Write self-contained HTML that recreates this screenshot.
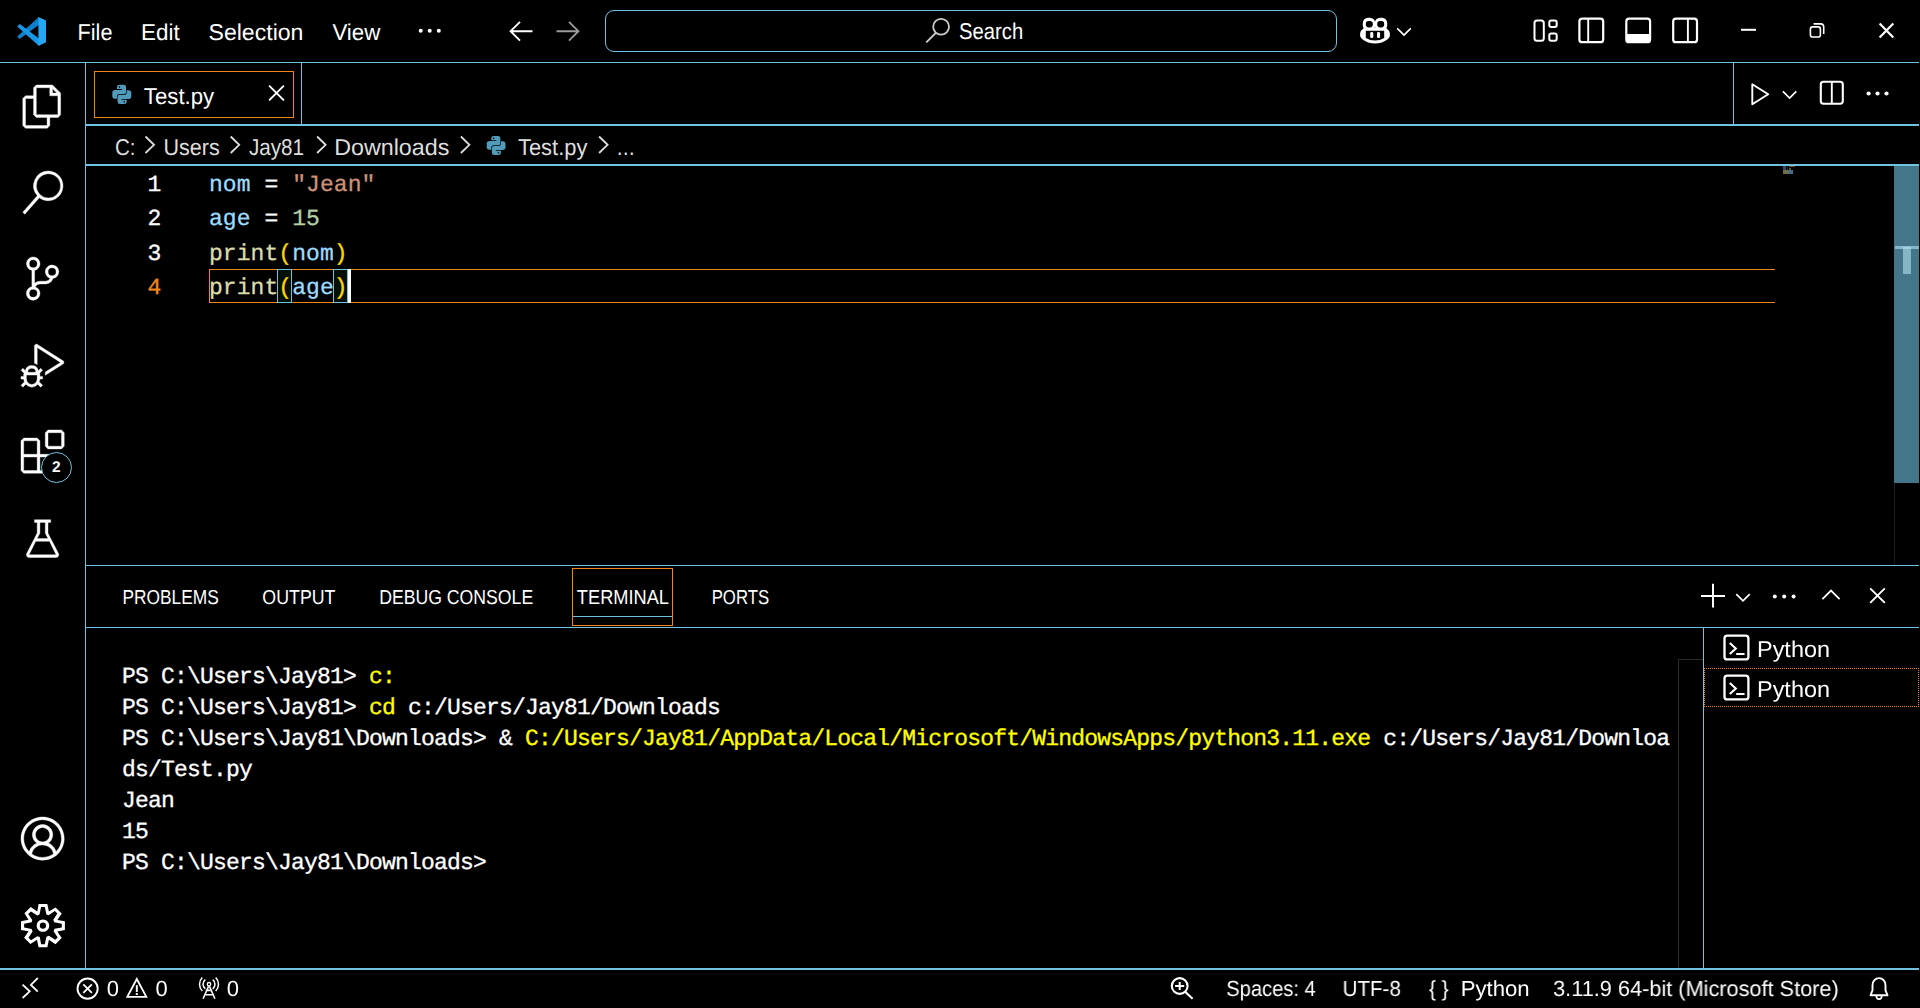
<!DOCTYPE html>
<html lang="en"><head><meta charset="utf-8"><title>Test.py - Visual Studio Code</title>
<style>
html,body{margin:0;padding:0;background:#000;}
body{text-rendering:geometricPrecision;width:1920px;height:1008px;position:relative;overflow:hidden;font-family:"Liberation Sans", sans-serif;color:#fff;}
.b{position:absolute;}
.t{position:absolute;white-space:pre;line-height:0;font-family:"Liberation Sans", sans-serif;transform-origin:0 0;}
.m{position:absolute;white-space:pre;line-height:0;font-family:"Liberation Mono", monospace;-webkit-text-stroke:0.3px;}
svg{position:absolute;overflow:visible;}
.s{fill:none;stroke:#fff;stroke-width:1.8;}
</style></head><body>
<!-- frame lines and boxes -->
<div class="b" style="left:0px;top:62px;width:1919px;height:1px;background:#6FC3DF;"></div>
<div class="b" style="left:85px;top:63px;width:1px;height:905px;background:#6FC3DF;"></div>
<div class="b" style="left:86px;top:124px;width:1833px;height:2px;background:#6FC3DF;"></div>
<div class="b" style="left:301px;top:63px;width:1px;height:61px;background:#6FC3DF;"></div>
<div class="b" style="left:1733px;top:63px;width:1px;height:61px;background:#6FC3DF;"></div>
<div class="b" style="left:94px;top:71px;width:200px;height:47px;border:1px solid #F38518;box-sizing:border-box;"></div>
<div class="b" style="left:86px;top:164px;width:1833px;height:2px;background:#6FC3DF;"></div>
<div class="b" style="left:86px;top:565px;width:1833px;height:1px;background:#6FC3DF;"></div>
<div class="b" style="left:86px;top:627px;width:1833px;height:1px;background:#6FC3DF;"></div>
<div class="b" style="left:0px;top:968px;width:1919px;height:2px;background:#6FC3DF;"></div>
<div class="b" style="left:605px;top:10px;width:732px;height:42px;border:1px solid #6FC3DF;box-sizing:border-box;border-radius:9px;"></div>
<div class="b" style="left:209px;top:269px;width:1566px;height:34px;border-top:1px solid #F38518;border-bottom:1px solid #F38518;border-left:1px solid #F38518;box-sizing:border-box;"></div>
<div class="b" style="left:277px;top:269px;width:15px;height:34px;background:#031003;border:1px solid #6FC3DF;box-sizing:border-box;"></div>
<div class="b" style="left:333px;top:269px;width:15px;height:34px;background:#031003;border:1px solid #6FC3DF;box-sizing:border-box;"></div>
<div class="b" style="left:348px;top:269px;width:3px;height:34px;background:#fff;"></div>
<div class="b" style="left:1894px;top:166px;width:25px;height:317px;background:#437688;"></div>
<div class="b" style="left:1895px;top:246px;width:24px;height:3px;background:#86b8ca;"></div>
<div class="b" style="left:1903px;top:247px;width:8px;height:27px;background:#86b5c6;"></div>
<div class="b" style="left:1903px;top:247px;width:8px;height:2px;background:#9fd1e3;"></div>
<div class="b" style="left:1894px;top:483px;width:1px;height:82px;background:#1c1c1c;"></div>
<div class="b" style="left:1783px;top:166px;width:3px;height:4px;background:#2c4d6a;"></div>
<div class="b" style="left:1787px;top:166px;width:1px;height:4px;background:#2a2a2a;"></div>
<div class="b" style="left:1789px;top:166px;width:6px;height:1px;background:#7a4029;"></div>
<div class="b" style="left:1789px;top:168px;width:2px;height:2px;background:#4f6030;"></div>
<div class="b" style="left:1783px;top:170px;width:6px;height:4px;background:#6f6d49;"></div>
<div class="b" style="left:1789px;top:170px;width:4px;height:4px;background:#386e96;"></div>
<div class="b" style="left:572px;top:568px;width:101px;height:58px;border:1px solid #F38518;box-sizing:border-box;"></div>
<div class="b" style="left:573px;top:616px;width:99px;height:1px;background:#6FC3DF;"></div>
<div class="b" style="left:1703px;top:628px;width:1px;height:340px;background:#6FC3DF;"></div>
<div class="b" style="left:1704px;top:668px;width:215px;height:39px;border:1px dotted #F38518;box-sizing:border-box;"></div>
<div class="b" style="left:1678px;top:659px;width:1px;height:309px;background:#2b2b2b;"></div>
<div class="b" style="left:1678px;top:659px;width:25px;height:1px;background:#2b2b2b;"></div>
<!-- ui text -->
<span class="t" style="left:0;top:0;font-size:22.9px;transform:translate(77.61px,32.07px) scaleX(0.9445);color:#fff;">File</span>
<span class="t" style="left:0;top:0;font-size:22.9px;transform:translate(140.98px,32.07px) scaleX(0.9811);color:#fff;">Edit</span>
<span class="t" style="left:0;top:0;font-size:22.9px;transform:translate(208.49px,32.07px) scaleX(1.0083);color:#fff;">Selection</span>
<span class="t" style="left:0;top:0;font-size:22.9px;transform:translate(332.43px,32.07px) scaleX(0.9717);color:#fff;">View</span>
<span class="t" style="left:0;top:0;font-size:22.9px;transform:translate(959.11px,31.07px) scaleX(0.8825);color:#fff;">Search</span>
<span class="t" style="left:0;top:0;font-size:22.9px;transform:translate(143.84px,96.07px) scaleX(0.9698);color:#fff;">Test.py</span>
<span class="t" style="left:0;top:0;font-size:22.9px;transform:translate(114.88px,147.07px) scaleX(0.8992);color:#dedede;">C:</span>
<span class="t" style="left:0;top:0;font-size:22.9px;transform:translate(163.50px,147.07px) scaleX(0.9400);color:#dedede;">Users</span>
<span class="t" style="left:0;top:0;font-size:22.9px;transform:translate(248.88px,147.07px) scaleX(0.9023);color:#dedede;">Jay81</span>
<span class="t" style="left:0;top:0;font-size:22.9px;transform:translate(334.16px,147.07px) scaleX(1.0172);color:#dedede;">Downloads</span>
<span class="t" style="left:0;top:0;font-size:22.9px;transform:translate(517.99px,147.07px) scaleX(0.9561);color:#dedede;">Test.py</span>
<span class="t" style="left:0;top:0;font-size:22.9px;transform:translate(616.79px,147.07px) scaleX(0.9343);color:#dedede;">...</span>
<span class="t" style="left:0;top:0;font-size:20.2px;transform:translate(122.42px,598.00px) scaleX(0.8584);color:#fff;">PROBLEMS</span>
<span class="t" style="left:0;top:0;font-size:20.2px;transform:translate(262.37px,598.00px) scaleX(0.8807);color:#fff;">OUTPUT</span>
<span class="t" style="left:0;top:0;font-size:20.2px;transform:translate(379.18px,598.00px) scaleX(0.8745);color:#fff;">DEBUG CONSOLE</span>
<span class="t" style="left:0;top:0;font-size:20.2px;transform:translate(576.87px,598.00px) scaleX(0.9019);color:#fff;">TERMINAL</span>
<span class="t" style="left:0;top:0;font-size:20.2px;transform:translate(711.66px,598.00px) scaleX(0.8304);color:#fff;">PORTS</span>
<span class="t" style="left:0;top:0;font-size:22.9px;transform:translate(1757.00px,649.07px) scaleX(1.0246);color:#fff;will-change:transform;">Python</span>
<span class="t" style="left:0;top:0;font-size:22.9px;transform:translate(1757.00px,689.07px) scaleX(1.0246);color:#fff;will-change:transform;">Python</span>
<span class="t" style="left:0;top:0;font-size:21.8px;transform:translate(106.70px,988.98px) scaleX(1.0108);color:#fff;will-change:transform;">0</span>
<span class="t" style="left:0;top:0;font-size:21.8px;transform:translate(155.42px,988.98px) scaleX(1.0061);color:#fff;will-change:transform;">0</span>
<span class="t" style="left:0;top:0;font-size:21.8px;transform:translate(226.87px,988.98px) scaleX(1.0119);color:#fff;will-change:transform;">0</span>
<span class="t" style="left:0;top:0;font-size:21.8px;transform:translate(1226.29px,988.98px) scaleX(0.9225);color:#fff;will-change:transform;">Spaces: 4</span>
<span class="t" style="left:0;top:0;font-size:21.8px;transform:translate(1342.57px,988.98px) scaleX(0.9432);color:#fff;will-change:transform;">UTF-8</span>
<span class="t" style="left:0;top:0;font-size:21.8px;transform:translate(1428.93px,988.98px) scaleX(0.9606);color:#fff;will-change:transform;">{ }</span>
<span class="t" style="left:0;top:0;font-size:21.8px;transform:translate(1460.65px,988.98px) scaleX(1.0165);color:#fff;will-change:transform;">Python</span>
<span class="t" style="left:0;top:0;font-size:21.8px;transform:translate(1553.12px,988.98px) scaleX(0.9963);color:#fff;will-change:transform;">3.11.9 64-bit (Microsoft Store)</span>
<!-- editor -->
<span class="m" style="left:209.00px;top:185.23px;font-size:23.0px;letter-spacing:0.060px;"><span style="color:#9CDCFE">nom</span><span style="color:#ffffff"> = </span><span style="color:#CE9178">"Jean"</span></span>
<span class="m" style="left:209.00px;top:219.23px;font-size:23.0px;letter-spacing:0.060px;"><span style="color:#9CDCFE">age</span><span style="color:#ffffff"> = </span><span style="color:#B5CEA8">15</span></span>
<span class="m" style="left:209.00px;top:253.63px;font-size:23.0px;letter-spacing:0.060px;"><span style="color:#DCDCAA">print</span><span style="color:#FFD700">(</span><span style="color:#9CDCFE">nom</span><span style="color:#FFD700">)</span></span>
<span class="m" style="left:209.00px;top:288.23px;font-size:23.0px;letter-spacing:0.060px;"><span style="color:#DCDCAA">print</span><span style="color:#FFD700">(</span><span style="color:#9CDCFE">age</span><span style="color:#FFD700">)</span></span>
<span class="m" style="left:147.60px;top:185.23px;font-size:23.0px;letter-spacing:0.060px;"><span style="color:#ffffff">1</span></span>
<span class="m" style="left:147.60px;top:219.23px;font-size:23.0px;letter-spacing:0.060px;"><span style="color:#ffffff">2</span></span>
<span class="m" style="left:147.60px;top:253.63px;font-size:23.0px;letter-spacing:0.060px;"><span style="color:#ffffff">3</span></span>
<span class="m" style="left:147.60px;top:288.23px;font-size:23.0px;letter-spacing:0.060px;"><span style="color:#F38518">4</span></span>
<!-- terminal -->
<span class="m" style="left:122.00px;top:677.23px;font-size:23.0px;letter-spacing:-0.800px;"><span style="color:#ffffff">PS C:\Users\Jay81&gt; </span><span style="color:#ffff00">c:</span></span>
<span class="m" style="left:122.00px;top:708.23px;font-size:23.0px;letter-spacing:-0.800px;"><span style="color:#ffffff">PS C:\Users\Jay81&gt; </span><span style="color:#ffff00">cd</span><span style="color:#ffffff"> c:/Users/Jay81/Downloads</span></span>
<span class="m" style="left:122.00px;top:739.23px;font-size:23.0px;letter-spacing:-0.800px;"><span style="color:#ffffff">PS C:\Users\Jay81\Downloads&gt; </span><span style="color:#ffffff">&amp; </span><span style="color:#ffff00">C:/Users/Jay81/AppData/Local/Microsoft/WindowsApps/python3.11.exe</span><span style="color:#ffffff"> c:/Users/Jay81/Downloa</span></span>
<span class="m" style="left:122.00px;top:770.23px;font-size:23.0px;letter-spacing:-0.800px;"><span style="color:#ffffff">ds/Test.py</span></span>
<span class="m" style="left:122.00px;top:801.23px;font-size:23.0px;letter-spacing:-0.800px;"><span style="color:#ffffff">Jean</span></span>
<span class="m" style="left:122.00px;top:832.23px;font-size:23.0px;letter-spacing:-0.800px;"><span style="color:#ffffff">15</span></span>
<span class="m" style="left:122.00px;top:863.23px;font-size:23.0px;letter-spacing:-0.800px;"><span style="color:#ffffff">PS C:\Users\Jay81\Downloads&gt; </span></span>
<!-- icons -->
<!-- activity bar icons -->
<svg style="left:21.4px;top:84.6px" width="43.2" height="43.2" viewBox="0 0 24 24" fill="#fff" stroke="#fff" stroke-width="0.22"><path d="M17.5 0h-9L7 1.5V6H2.5L1 7.5v15.07L2.5 24h12.07L16 22.57V18h4.7l1.3-1.43V4.5L17.5 0zm0 2.12l2.38 2.38H17.5V2.12zm-3 20.38h-12v-15H7v9.07L8.5 18h6v4.5zm6-6h-12v-15H16V6h4.5v10.5z"/></svg>
<svg style="left:21.4px;top:171px" width="43.2" height="43.2" viewBox="0 0 24 24" fill="#fff" stroke="#fff" stroke-width="0.22"><path d="M15.25 0a8.25 8.25 0 0 0-6.18 13.72L1 22.88l1.12 1.12 8.05-9.12A8.251 8.251 0 1 0 15.25.01V0zm0 15a6.75 6.75 0 1 1 0-13.5 6.75 6.75 0 0 1 0 13.5z"/></svg>
<svg style="left:21.4px;top:257.4px" width="43.2" height="43.2" viewBox="0 0 24 24" fill="#fff" stroke="#fff" stroke-width="0.22"><path d="M21.007 8.222A3.738 3.738 0 0 0 15.045 5.2a3.737 3.737 0 0 0 1.156 6.583 2.988 2.988 0 0 1-2.668 1.67h-2.99a4.456 4.456 0 0 0-2.989 1.165V7.4a3.737 3.737 0 1 0-1.494 0v9.117a3.776 3.776 0 1 0 1.816.099 2.99 2.99 0 0 1 2.668-1.667h2.99a4.484 4.484 0 0 0 4.223-3.039 3.736 3.736 0 0 0 3.25-3.687zM4.565 3.738a2.242 2.242 0 1 1 4.484 0 2.242 2.242 0 0 1-4.484 0zm4.484 16.441a2.242 2.242 0 1 1-4.484 0 2.242 2.242 0 0 1 4.484 0zm8.221-9.715a2.242 2.242 0 1 1 0-4.485 2.242 2.242 0 0 1 0 4.485z"/></svg>
<svg style="left:21.4px;top:343.8px" width="43.2" height="43.2" viewBox="0 0 24 24" fill="#fff" stroke="#fff" stroke-width="0.22"><path d="M10.94 13.5l-1.32 1.32a3.73 3.73 0 0 0-7.24 0L1.06 13.5 0 14.56l1.72 1.72-.22.22V18H0v1.5h1.5v.08c.077.489.214.966.41 1.42L0 22.94 1.06 24l1.65-1.65A4.308 4.308 0 0 0 6 24a4.31 4.31 0 0 0 3.29-1.65L10.94 24 12 22.94 10.09 21c.198-.464.336-.951.41-1.45v-.1H12V18h-1.5v-1.5l-.22-.22L12 14.56l-1.06-1.06zM6 13.5a2.25 2.25 0 0 1 2.25 2.25h-4.5A2.25 2.25 0 0 1 6 13.5zm3 6a3.33 3.33 0 0 1-3 3 3.33 3.33 0 0 1-3-3v-2.25h6v2.25zm14.76-9.9v1.26L13.5 17.37V15.6l8.5-5.37L9 2v9.46a5.07 5.07 0 0 0-1.5-.72V.63L8.64 0l15.12 9.6z"/></svg>
<svg style="left:21.4px;top:430.2px" width="43.2" height="43.2" viewBox="0 0 24 24" fill="#fff" stroke="#fff" stroke-width="0.22"><path d="M13.5 1.5L15 0h7.5L24 1.5V9l-1.5 1.5H15L13.5 9V1.5zm1.5 0V9h7.5V1.5H15zM0 15V6l1.5-1.5H9L10.5 6v7.5H18l1.5 1.5v7.5L18 24H1.5L0 22.500V15zm9-1.500V6H1.5v7.500H9zM9 15H1.500v7.500H9V15zm1.500 7.500H18V15h-7.500v7.500z"/></svg>
<svg style="left:21.4px;top:516.6px" width="43.2" height="43.2" viewBox="0 0 16 16" fill="#fff" stroke="#fff" stroke-width="0.14"><path d="M13.893 13.558L10 6.006v-4h1v-1H9.994V1H9v.006H7V1H6v.006H5v1h1v3.96L2.107 13.558A1 1 0 0 0 3 15h10a1 1 0 0 0 .893-1.442zM7 6.006v-4h2v4l.1.24.928 1.76H5.972l.928-1.76.1-.24zM3 14l2.445-4.994h5.11L13 14H3z"/></svg>
<svg style="left:21.1px;top:816.9px" width="43.2" height="43.2" viewBox="0 0 16 16" fill="#fff" stroke="#fff" stroke-width="0.16"><path d="M16 7.992C16 3.58 12.416 0 8 0S0 3.58 0 7.992c0 2.43 1.104 4.62 2.832 6.09.016.016.032.016.032.032.144.112.288.224.448.336.08.048.144.111.224.175A7.98 7.98 0 0 0 8.016 16a7.98 7.98 0 0 0 4.48-1.375c.08-.048.144-.111.224-.16.144-.111.304-.223.448-.335.016-.016.032-.016.032-.032 1.696-1.487 2.8-3.676 2.8-6.106zm-8 7.001c-1.504 0-2.88-.48-4.016-1.279.016-.128.048-.255.08-.383a4.17 4.17 0 0 1 .416-.991c.176-.304.384-.576.64-.816.24-.24.528-.463.816-.639.304-.176.624-.304.976-.4A4.15 4.15 0 0 1 8 10.342a4.185 4.185 0 0 1 2.928 1.166c.368.368.656.8.864 1.295.112.288.192.592.24.911A7.03 7.03 0 0 1 8 14.993zm-2.448-7.4a2.490 2.490 0 0 1-.208-1.024c0-.351.064-.703.208-1.023.144-.32.336-.607.576-.847.24-.24.528-.431.848-.575.32-.144.672-.208 1.024-.208.368 0 .704.064 1.024.208.32.144.608.336.848.575.24.24.432.528.576.847.144.32.208.672.208 1.023 0 .368-.064.704-.208 1.023a2.840 2.840 0 0 1-.576.848 2.840 2.840 0 0 1-.848.575 2.715 2.715 0 0 1-2.064 0 2.840 2.840 0 0 1-.848-.575 2.526 2.526 0 0 1-.56-.848zm7.424 5.306c0-.032-.016-.048-.016-.08a5.220 5.220 0 0 0-.688-1.406 4.883 4.883 0 0 0-1.088-1.135 5.207 5.207 0 0 0-1.040-.608 2.820 2.820 0 0 0 .464-.383 4.200 4.200 0 0 0 .624-.784 3.624 3.624 0 0 0 .528-1.934 3.710 3.710 0 0 0-.288-1.470 3.799 3.799 0 0 0-.816-1.199 3.845 3.845 0 0 0-1.200-.800 3.720 3.720 0 0 0-1.472-.287 3.720 3.720 0 0 0-1.472.288 3.631 3.631 0 0 0-1.200.815 3.840 3.840 0 0 0-.800 1.199 3.710 3.710 0 0 0-.288 1.470c0 .352.048.688.144 1.007.096.336.224.640.400.927.160.288.384.544.624.784.144.144.304.271.480.383a5.120 5.120 0 0 0-1.040.624c-.416.320-.784.703-1.088 1.119a4.999 4.999 0 0 0-.688 1.406c-.016.032-.016.064-.016.080C1.776 11.636.992 9.910.992 7.992.992 4.140 4.144.991 8 .991s7.008 3.149 7.008 7.001a6.960 6.960 0 0 1-2.032 4.907z"/></svg>
<svg style="left:21.1px;top:903.7px" width="43.9" height="43.3" viewBox="1 1 14 14" preserveAspectRatio="none" fill="#fff"><path d="M9.1 4.4L8.6 2H7.4l-.5 2.4-.7.3-2-1.300-.9.800 1.300 2-.2.700-2.400.500v1.200l2.400.500.3.800-1.300 2 .8.800 2-1.300.8.300.4 2.300h1.200l.5-2.400.8-.3 2 1.300.8-.8-1.300-2 .3-.8 2.300-.4V7.400l-2.400-.5-.3-.8 1.300-2-.8-.8-2 1.300-.7-.2zM9.400 1l.5 2.400L12 2.100l2 2-1.400 2.100 2.400.4v2.800l-2.400.5L14 12l-2 2-2.100-1.400-.5 2.400H6.600l-.5-2.400L4 13.900l-2-2 1.400-2.100L1 9.400V6.600l2.400-.5L2.100 4l2-2 2.100 1.400.4-2.400h2.800zm.6 7c0 1.100-.9 2-2 2s-2-.9-2-2 .9-2 2-2 2 .9 2 2zM8 9c.6 0 1-.4 1-1s-.4-1-1-1-1 .4-1 1 .4 1 1 1z"/></svg>
<svg width="1920" height="1008" viewBox="0 0 1920 1008" style="left:0;top:0">
<g transform="translate(17 16.8)"><polygon points="22,0.2 22,7.9 2.6,22.3 0.2,19.6" fill="#0d7fcb"/><polygon points="2.8,7.2 0.2,9.8 22,29.3 22,21.7" fill="#1a96e6"/><polygon points="21.4,0.2 29,3.7 29,25.5 21.4,29.3" fill="#24a8f3"/></g>
<circle cx="420.7" cy="30.7" r="2" fill="#fff"/>
<circle cx="429.7" cy="30.7" r="2" fill="#fff"/>
<circle cx="438.8" cy="30.7" r="2" fill="#fff"/>
<path class="s" style="stroke-width:1.9" d="M520 21.8L510.6 31.2L520 40.700M510.800 31.2H532.5"/>
<path class="s" style="stroke-width:1.9;stroke:#9a9a9a" d="M569 21.8L578.4 31.2L569 40.700M578.200 31.2H556.5"/>
<circle class="s" style="stroke:#ccc;stroke-width:1.8" cx="941.1" cy="26.8" r="7.9"/><path class="s" style="stroke:#ccc;stroke-width:1.9" d="M935.8 32.800L926.300 42.300"/>
<g transform="translate(1360 17.5)" fill="#fff"><path d="M3 11.500Q0 13 0 17.500Q0 20 2 21.500Q8 26 15 26Q22 26 28 21.500Q30 20 30 17.500Q30 13 27 11.500L26 10H4Z"/><rect x="2.8" y="0.3" width="12.4" height="12.6" rx="5.2"/><rect x="14.8" y="0.3" width="12.4" height="12.600" rx="5.200"/><rect x="5.800" y="3.600" width="7" height="6.300" rx="2.800" fill="#000"/><rect x="17.200" y="3.600" width="7" height="6.300" rx="2.800" fill="#000"/><path d="M5.800 13.300H24.200V20.500Q20 23 15 23Q10 23 5.800 20.500Z" fill="#000"/><rect x="10.200" y="14.600" width="3.100" height="6" rx="1.400"/><rect x="17" y="14.600" width="3.100" height="6" rx="1.400"/></g>
<path class="s" style="stroke-width:1.7" d="M1397.2 28.300L1404 35.100L1410.800 28.300"/>
<rect class="s" style="stroke-width:2" x="1534.5" y="20.400" width="9.300" height="20.300" rx="2.500"/>
<rect class="s" style="stroke-width:2" x="1549.300" y="20.400" width="7.400" height="6.700" rx="2"/>
<rect class="s" style="stroke-width:2" x="1549.300" y="33.600" width="7.400" height="7.100" rx="2"/>
<rect class="s" style="stroke-width:2.2" x="1579.4" y="18.600" width="23.800" height="23.600" rx="2.800"/>
<path class="s" style="stroke-width:1.9" d="M1588.2 18.600V42.200"/>
<rect class="s" style="stroke-width:2.2" x="1626.3" y="18.600" width="23.800" height="23.600" rx="2.800"/>
<path d="M1626.3 34H1650.1V40Q1650.1 42.200 1647.9 42.200H1628.5Q1626.3 42.200 1626.3 40Z" fill="#fff"/>
<rect class="s" style="stroke-width:2.2" x="1673.2" y="18.600" width="23.800" height="23.600" rx="2.800"/>
<path class="s" style="stroke-width:1.9" d="M1687.9 18.600V42.200"/>
<rect x="1741" y="28.800" width="15" height="2" fill="#fff"/>
<rect class="s" style="stroke-width:1.600" x="1810.400" y="26.900" width="10" height="10.100" rx="2.300"/>
<path class="s" style="stroke-width:1.600" d="M1813.600 23.900H1820.700Q1823.700 23.900 1823.700 26.900V34"/>
<path class="s" style="stroke-width:2.200" d="M1879.600 23.600L1893.300 37.400M1893.300 23.600L1879.600 37.400"/>
<path class="s" style="stroke-width:1.900" d="M269.100 85.600L283.900 100.400M283.900 85.600L269.100 100.400"/>
<g transform="translate(112.3 84.8) scale(1.0)" fill="#519aba"><path d="M7 0H11.4Q13.8 0 13.8 2.4V7.100Q13.8 9.300 11.600 9.300H7.200Q4.600 9.300 4.600 11.900V13.900H2.800Q0 13.900 0 11.100V7.900Q0 5.100 2.800 5.100H9.700V4.300H4.600V2.400Q4.600 0 7 0Z"/><path transform="rotate(180 9.5 9.65)" d="M7 0H11.4Q13.8 0 13.8 2.4V7.100Q13.8 9.300 11.600 9.300H7.200Q4.600 9.300 4.600 11.900V13.900H2.800Q0 13.900 0 11.100V7.900Q0 5.100 2.800 5.100H9.700V4.300H4.600V2.400Q4.600 0 7 0Z"/><circle cx="7.1" cy="2.3" r="0.8" fill="#000"/><circle cx="11.9" cy="17" r="0.8" fill="#000"/></g>
<g transform="translate(486.7 136.0) scale(0.99)" fill="#519aba"><path d="M7 0H11.4Q13.8 0 13.8 2.4V7.100Q13.8 9.300 11.600 9.300H7.200Q4.600 9.300 4.600 11.900V13.900H2.800Q0 13.900 0 11.100V7.900Q0 5.100 2.800 5.100H9.700V4.300H4.600V2.400Q4.600 0 7 0Z"/><path transform="rotate(180 9.5 9.65)" d="M7 0H11.4Q13.8 0 13.8 2.4V7.100Q13.8 9.300 11.600 9.300H7.200Q4.600 9.300 4.600 11.900V13.900H2.800Q0 13.900 0 11.100V7.900Q0 5.100 2.800 5.100H9.700V4.300H4.600V2.400Q4.600 0 7 0Z"/><circle cx="7.1" cy="2.3" r="0.8" fill="#000"/><circle cx="11.9" cy="17" r="0.8" fill="#000"/></g>
<path class="s" style="stroke-width:1.900;stroke-linejoin:round" d="M1752.300 84.300V104.200L1768.200 94.200Z"/>
<path class="s" style="stroke-width:1.700" d="M1782.900 91.400L1789.600 98.100L1796.300 91.400"/>
<rect class="s" style="stroke-width:2.100" x="1820.800" y="81.800" width="22" height="21.900" rx="2.600"/><path class="s" style="stroke-width:1.900" d="M1831.800 81.800V103.700"/>
<circle cx="1868.6" cy="93.500" r="2.100" fill="#fff"/>
<circle cx="1877.5" cy="93.500" r="2.100" fill="#fff"/>
<circle cx="1886.5" cy="93.500" r="2.100" fill="#fff"/>
<path class="s" style="stroke:#dedede" d="M145.5 136.5L154.0 144.8L145.5 153.0"/>
<path class="s" style="stroke:#dedede" d="M230.7 136.5L239.2 144.8L230.7 153.0"/>
<path class="s" style="stroke:#dedede" d="M317.1 136.5L325.6 144.8L317.1 153.0"/>
<path class="s" style="stroke:#dedede" d="M460.9 136.5L469.4 144.8L460.9 153.0"/>
<path class="s" style="stroke:#dedede" d="M599.1 136.5L607.6 144.8L599.1 153.0"/>
<path class="s" style="stroke-width:2" d="M1701 596H1725M1713 583.800V607.600"/>
<path class="s" style="stroke-width:1.700" d="M1736.300 594.100L1743 600.800L1749.700 594.100"/>
<circle cx="1774.8" cy="596.500" r="2" fill="#fff"/>
<circle cx="1784.2" cy="596.500" r="2" fill="#fff"/>
<circle cx="1793.6" cy="596.500" r="2" fill="#fff"/>
<path class="s" style="stroke-width:1.800" d="M1822.400 599.200L1831 590.600L1839.600 599.200"/>
<path class="s" style="stroke-width:1.900" d="M1870.200 588.300L1884.800 602.900M1884.800 588.300L1870.200 602.900"/>
<rect class="s" style="stroke-width:2.3" x="1724.5" y="635.55" width="23.9" height="23.9" rx="2.8"/><path class="s" style="stroke-width:2.1" d="M1729.8 643.0L1735.8 648.5L1729.8 654.0"/><path class="s" style="stroke-width:2" d="M1736.2 654.0H1744.6"/>
<rect class="s" style="stroke-width:2.3" x="1724.5" y="675.55" width="23.9" height="23.9" rx="2.8"/><path class="s" style="stroke-width:2.1" d="M1729.8 683.0L1735.8 688.5L1729.8 694.0"/><path class="s" style="stroke-width:2" d="M1736.2 694.0H1744.6"/>
<path class="s" style="stroke-width:1.800" d="M37.800 978L30.900 984.900L37.800 991.600M22.600 984.600L29.700 991.300L22.600 998"/>
<circle class="s" style="stroke-width:1.900" cx="87.600" cy="988.600" r="10.100"/><path class="s" style="stroke-width:1.800" d="M83.300 984.300L91.900 992.900M91.900 984.300L83.300 992.900"/>
<path class="s" style="stroke-width:1.800;stroke-linejoin:miter" d="M136.800 979L127.300 996.800H146.300Z"/><path class="s" style="stroke-width:1.900" d="M136.800 985.200V992"/><rect x="135.800" y="993.100" width="2" height="1.900" fill="#fff"/>
<circle class="s" style="stroke-width:1.300" cx="209" cy="984.200" r="1.700"/><path class="s" style="stroke-width:1.600" d="M208.600 986.200L203.100 998.700M209.400 986.200L214.900 998.700M205.800 990.400H212.200M204.200 994.700H213.800"/><path class="s" style="stroke-width:1.500" d="M205.300 979.600A5.800 5.800 0 0 0 205.300 988.800M212.700 979.600A5.800 5.800 0 0 1 212.700 988.800M202.300 977.500A9.600 9.600 0 0 0 202.300 991M215.700 977.500A9.600 9.600 0 0 1 215.700 991"/>
<circle class="s" style="stroke-width:2.100" cx="1179.700" cy="986" r="7.900"/><path class="s" style="stroke-width:2.100" d="M1185.400 991.900L1192.600 998.800"/><path class="s" style="stroke-width:2" d="M1175.100 986H1184.200M1179.700 982V989.900"/>
<path class="s" style="stroke-width:1.900;stroke-linejoin:round" d="M1870.500 995.300L1872.500 990.300V985.300A6.500 7.200 0 0 1 1885.500 985.300V990.300L1887.500 995.300Z"/><path class="s" style="stroke-width:1.700" d="M1876.400 996A2.600 3 0 0 0 1881.700 996"/>
</svg>
<div class="b" style="left:41px;top:452px;width:31px;height:31px;background:#000;border:1px solid #6FC3DF;box-sizing:border-box;border-radius:50%;"></div>
<span class="t" style="left:51.9px;top:468.3px;font-size:15.5px;font-weight:bold">2</span>
</body></html>
